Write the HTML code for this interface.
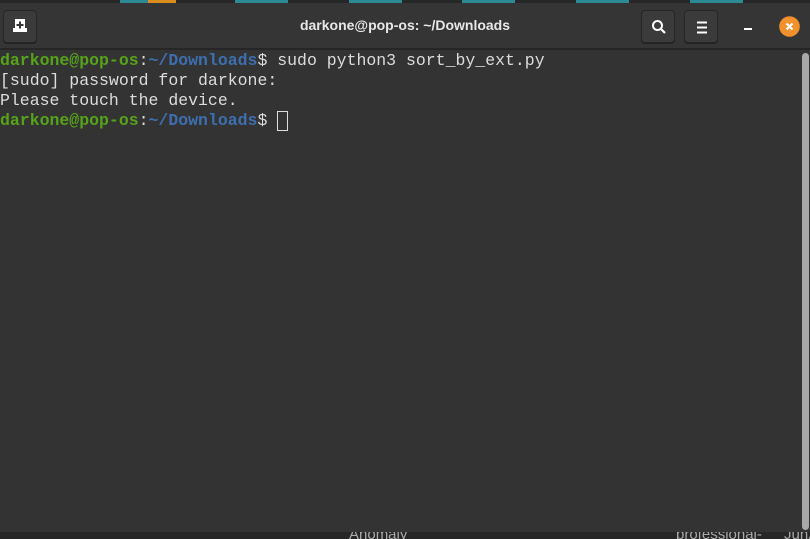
<!DOCTYPE html>
<html><head><style>
*{margin:0;padding:0;box-sizing:border-box}
body{width:810px;height:539px;background:#262626;overflow:hidden;position:relative;font-family:"Liberation Sans",sans-serif}
.strip{position:absolute;top:0;height:3px;background:#2b8a93}
.hdr{position:absolute;top:3px;left:0;width:810px;height:46px;background:#353535;border-bottom:1px solid #262626}
.btn{position:absolute;top:7px;height:33px;width:34px;background:#3b3b3b;border:1px solid #262626;border-radius:4px;box-shadow:0 1px 0 #222}
.title{position:absolute;top:14px;left:0;width:810px;text-align:center;color:#e8e8e8;font-size:14px;font-weight:bold}
.term{position:absolute;top:50px;left:0;width:810px;height:482px;background:#333333;font-family:"Liberation Mono",monospace;font-size:16.5px;line-height:20px;color:#dcdcdc;white-space:pre;padding-top:1px}
.g{color:#56a31a;font-weight:bold}.b{color:#3d6fb0;font-weight:bold}
.cur{display:inline-block;width:11px;height:20px;border:1px solid #ddd;vertical-align:top;margin-top:0}
.sb{position:absolute;right:1px;top:53px;width:7px;height:477px;background:#a8a8a8;border-radius:4px}
.botwrap{position:absolute;top:532px;left:0;width:810px;height:7px;overflow:hidden;background:#262626}
.bot{position:absolute;top:-6px;font-size:15px;color:#aaa}
</style></head><body>
<div class="strip" style="left:120px;width:28px"></div>
<div class="strip" style="left:148px;width:28px;background:#d98d1c"></div>
<div class="strip" style="left:235px;width:53px"></div>
<div class="strip" style="left:349px;width:53px"></div>
<div class="strip" style="left:462px;width:53px"></div>
<div class="strip" style="left:576px;width:53px"></div>
<div class="strip" style="left:690px;width:53px"></div>
<div class="hdr">
 <div class="btn" style="left:3px"><svg width="34" height="33" viewBox="0 0 34 33"><path d="M11 8h10v9h2v4h-14v-4h2z" fill="#fff"/><path d="M16 10.5v7M12.5 14h7" stroke="#353535" stroke-width="2"/></svg></div>
 <div class="title">darkone@pop-os: ~/Downloads</div>
 <div class="btn" style="left:641px"><svg width="34" height="33" viewBox="0 0 34 33"><circle cx="15.5" cy="14.5" r="4.5" fill="none" stroke="#fff" stroke-width="2"/><path d="M19 18l4 4" stroke="#fff" stroke-width="2.2"/></svg></div>
 <div class="btn" style="left:684px"><svg width="34" height="33" viewBox="0 0 34 33"><path d="M12 11.5h10M12 16.5h10M12 21.5h10" stroke="#fff" stroke-width="2"/></svg></div>
 <div style="position:absolute;left:744px;top:25px;width:8px;height:2px;background:#fff"></div>
 <svg style="position:absolute;left:779px;top:13px" width="21" height="21" viewBox="0 0 21 21"><circle cx="10.5" cy="10.5" r="10.3" fill="#f0912d"/><path d="M7.5 7.5l6 6M13.5 7.5l-6 6" stroke="#fff" stroke-width="2.2"/></svg>
</div>
<div class="term"><span class="g">darkone@pop-os</span>:<span class="b">~/Downloads</span>$ sudo python3 sort_by_ext.py
[sudo] password for darkone:
Please touch the device.
<span class="g">darkone@pop-os</span>:<span class="b">~/Downloads</span>$ <span class="cur"></span></div>
<div class="sb"></div>
<div class="botwrap">
<div class="bot" style="left:349px">Anomaly</div>
<div class="bot" style="left:676px">professional-</div>
<div class="bot" style="left:784px">Jun2</div>
</div>
</body></html>
